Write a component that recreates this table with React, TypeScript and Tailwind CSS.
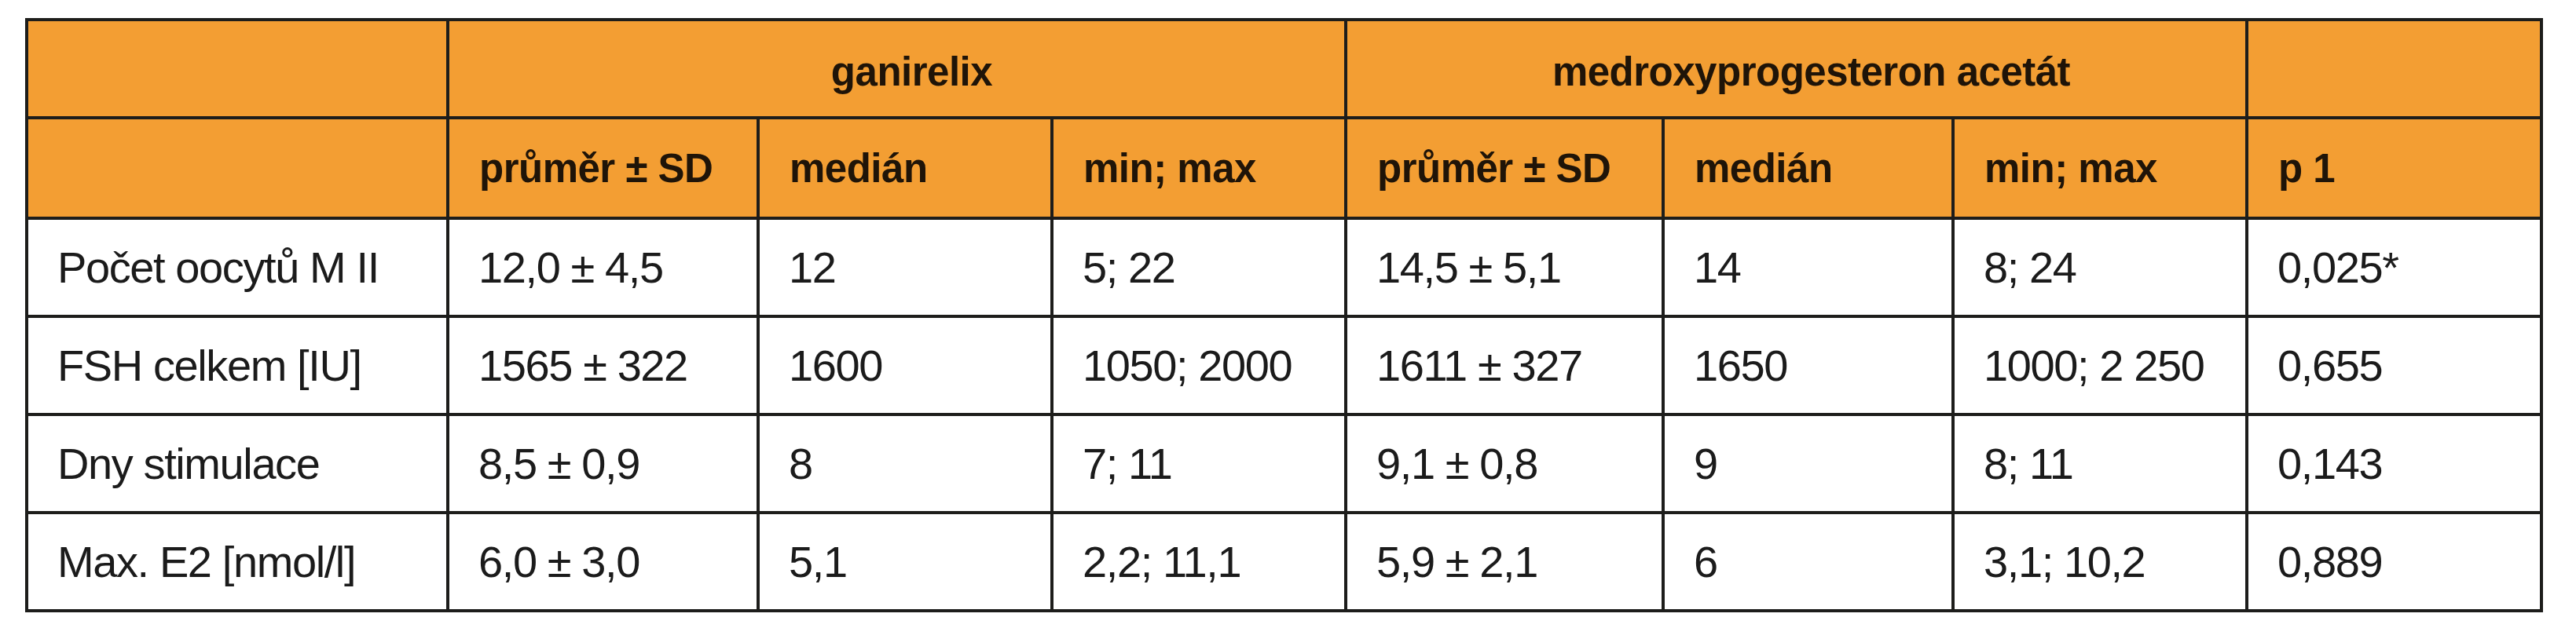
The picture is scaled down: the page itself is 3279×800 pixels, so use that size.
import React from "react";

const head = "bg-[#f39e33] flex items-center pl-[38px] font-bold text-[51px] leading-none text-[#1f1408] whitespace-nowrap tracking-[-0.5px]";
const body = "bg-white flex items-center pl-[37px] text-[56px] leading-none text-[#1b1b1b] whitespace-nowrap tracking-[-1.4px]";

const rows: string[][] = [
  ["Počet oocytů M II", "12,0 ± 4,5", "12", "5; 22", "14,5 ± 5,1", "14", "8; 24", "0,025*"],
  ["FSH celkem [IU]", "1565 ± 322", "1600", "1050; 2000", "1611 ± 327", "1650", "1000; 2 250", "0,655"],
  ["Dny stimulace", "8,5 ± 0,9", "8", "7; 11", "9,1 ± 0,8", "9", "8; 11", "0,143"],
  ["Max. E2 [nmol/l]", "6,0 ± 3,0", "5,1", "2,2; 11,1", "5,9 ± 2,1", "6", "3,1; 10,2", "0,889"],
];

export default function App() {
  return (
    <div
      className="bg-white w-full h-[800px] pt-[23px] pl-[32px]"
      style={{ fontFamily: '"Liberation Sans", Arial, sans-serif' }}
    >
      <div className="grid w-max gap-[4px] p-[4px] bg-[#1d1d1b] grid-cols-[532px_391px_370px_370px_400px_365px_370px_371px] grid-rows-[121px_124px_121px_121px_121px_121px]">
        <div className={head} />
        <div className={`${head} col-span-3 justify-center pl-0 pt-[8px]`}>ganirelix</div>
        <div className={`${head} col-span-3 justify-center pl-0 pt-[8px]`}>medroxyprogesteron acetát</div>
        <div className={head} />

        <div className={head} />
        <div className={head}>průměr ± SD</div>
        <div className={head}>medián</div>
        <div className={head}>min; max</div>
        <div className={head}>průměr ± SD</div>
        <div className={head}>medián</div>
        <div className={head}>min; max</div>
        <div className={head}>p 1</div>

        {rows.map((r, i) =>
          r.map((c, j) => (
            <div key={`${i}-${j}`} className={body}>
              {c}
            </div>
          ))
        )}
      </div>
    </div>
  );
}
